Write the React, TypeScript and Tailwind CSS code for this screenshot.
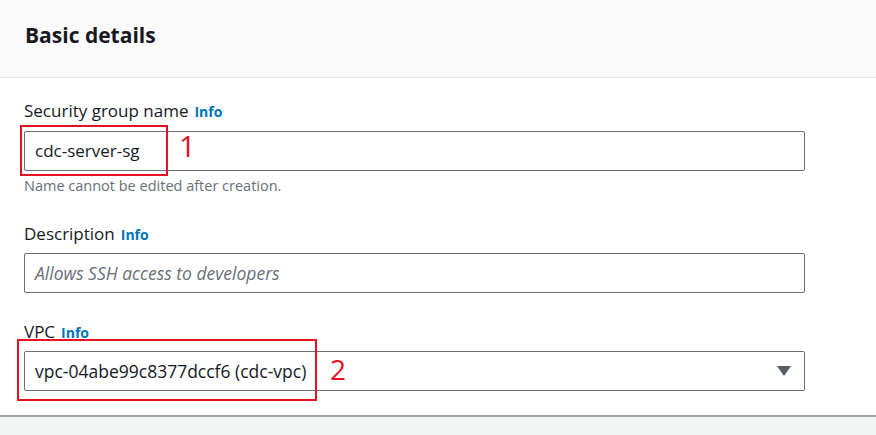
import React from 'react'

const Label = ({ text }: { text: string }) => (
  <div className="flex items-baseline gap-[6px] h-[22px] text-[17px] leading-[22px] text-[#16191f]">
    <span>{text}</span>
    <span className="text-[14px] font-bold text-[#0073bb]">Info</span>
  </div>
)

const App: React.FC = () => {
  return (
    <div
      className="relative w-[876px] h-[435px] overflow-hidden bg-[#f2f3f3]"
      style={{ fontFamily: '"Open Sans", Arial, sans-serif' }}
    >
      <div className="bg-[#fafafa] h-[78px] border-b border-[#e4e6e6] px-[25px] pt-[21px]">
        <h2 className="text-[21px] leading-[28px] font-bold text-[#16191f]">Basic details</h2>
      </div>
      <div className="bg-white h-[339px] border-b-2 border-[#9ba5a6] px-[24px] pt-[22px]">
        <Label text="Security group name" />
        <div className="mt-[9px] w-[781px] h-[40px] border border-[#687078] rounded-[2px] flex items-center px-[10px] text-[17px] text-[#16191f]">
          cdc-server-sg
        </div>
        <p className="mt-[5px] text-[14.5px] leading-[20px] text-[#687078]">Name cannot be edited after creation.</p>

        <div className="mt-[27px]">
          <Label text="Description" />
        </div>
        <div className="mt-[8px] w-[781px] h-[40px] border border-[#687078] rounded-[2px] flex items-center px-[10px] text-[17.5px] italic text-[#687078]">
          Allows SSH access to developers
        </div>

        <div className="mt-[28px]">
          <Label text="VPC" />
        </div>
        <div className="mt-[8px] w-[781px] h-[40px] border border-[#687078] rounded-[2px] flex items-center justify-between pl-[10px] pr-[13px] text-[17.5px] text-[#16191f]">
          <span>vpc-04abe99c8377dccf6 (cdc-vpc)</span>
          <svg width="14" height="10" viewBox="0 0 14 10">
            <path d="M0 0 H14 L7 10 Z" fill="#545b64" />
          </svg>
        </div>
      </div>

      {/* annotations */}
      <div className="absolute left-[20px] top-[125px] w-[148px] h-[51px] border-2 border-[#e81123]" />
      <span className="absolute left-[179px] top-[126px] text-[29px] leading-[40px] text-[#e81123]">1</span>
      <div className="absolute left-[17px] top-[339px] w-[300px] h-[62px] border-2 border-[#e81123]" />
      <span className="absolute left-[330px] top-[349px] text-[28px] leading-[40px] text-[#e81123]">2</span>
    </div>
  )
}

export default App
